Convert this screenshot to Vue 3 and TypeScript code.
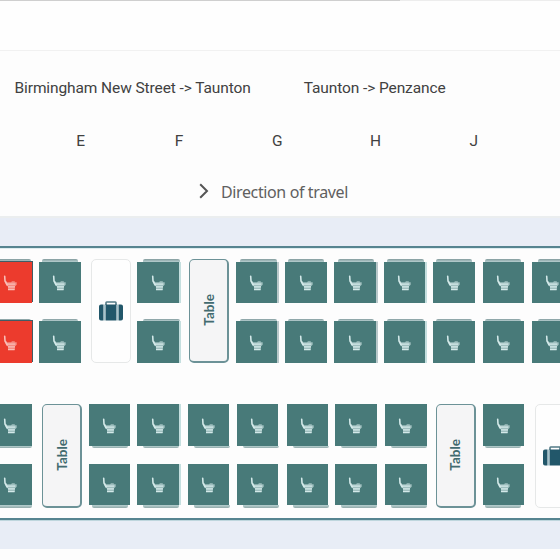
<script setup lang="ts">
type Side = 'none' | 'pale' | 'grey'
interface Column {
  kind: 'seat' | 'table' | 'luggage'
  // distance between the column's edge and its content
  inset: number
  taken?: boolean
  // horizontal extent of the armrest strip
  arm?: [number, number]
  side?: Side
}

const seat = (inset: number, from: number, to: number, side: Side = 'none', taken = false): Column => ({
  kind: 'seat', inset, arm: [from, to], side, taken,
})

const journeys = ['Birmingham New Street -> Taunton', 'Taunton -> Penzance']
const coaches = ['E', 'F', 'G', 'H', 'J']

const upper: Column[] = [
  seat(0.5, 4, 41, 'grey', true),
  seat(0, 3, 39),
  { kind: 'luggage', inset: 2.75 },
  seat(-0.25, 6, 43, 'pale'),
  { kind: 'table', inset: 2.25 },
  seat(-0.25, 4, 41, 'grey'),
  seat(0, 3, 39),
  seat(-0.25, 4, 40, 'grey'),
  seat(-0.25, 3, 40, 'pale'),
  seat(0, 3, 39),
  seat(0.5, 2, 38),
  seat(0, 6, 42),
]
const lower: Column[] = [
  seat(0.25, 4, 42),
  { kind: 'table', inset: 3 },
  seat(0.25, 3, 39),
  seat(-0.25, 6, 42, 'pale'),
  seat(1, 6, 42),
  seat(0.75, 6, 42),
  seat(1.25, 6, 42),
  seat(0.5, 6, 42),
  seat(1.25, 6, 42),
  { kind: 'table', inset: 2.5 },
  seat(0.5, 2, 38),
  { kind: 'luggage', inset: 3.25 },
]
const sections = [
  { name: 'upper', columns: upper },
  { name: 'lower', columns: lower },
]
</script>

<template>
  <main class="page">
    <div class="topbar"><span class="progress"></span></div>
    <nav class="journeys">
      <span v-for="j in journeys" :key="j" class="journey">{{ j }}</span>
    </nav>
    <nav class="coaches">
      <span v-for="c in coaches" :key="c">{{ c }}</span>
    </nav>
    <div class="direction">
      <svg width="10" height="16" viewBox="0 0 10 16"><path d="M1.2 1.2 8 8l-6.8 6.8" fill="none" stroke="#555" stroke-width="2" /></svg>
      <span>Direction of travel</span>
    </div>
    <section class="train">
      <div class="carriage">
        <div v-for="s in sections" :key="s.name" class="section" :class="s.name">
          <div v-for="(col, i) in s.columns" :key="i" class="column" :style="{ marginLeft: col.inset + 'px' }">
            <template v-if="col.kind === 'seat'">
              <div v-for="n in 2" :key="n" class="seat" :class="[col.side, { taken: col.taken }]">
                <span class="arm" :style="{ marginLeft: col.arm![0] + 'px', width: col.arm![1] - col.arm![0] + 'px' }"></span>
                <span class="cushion">
                  <svg width="15" height="17" viewBox="0 0 15 17">
                    <path d="M1.7 1.2 2 6 4.2 10" fill="none" stroke="currentColor" stroke-width="1.6" stroke-linecap="round" />
                    <path d="M2.5 5.5 4.2 7.2H8L9 6.2h2.8v1h1.9v2.6l-1.8 1.8v3.2H5v-3L2.8 9.3z" fill="currentColor" opacity=".62" />
                    <path d="M3.6 9.2h8.6M5 11.8h7M5 14.6h6.6" fill="none" stroke="currentColor" stroke-width="1.2" />
                  </svg>
                </span>
              </div>
            </template>
            <div v-else-if="col.kind === 'table'" class="table"><span>Table</span></div>
            <div v-else class="luggage">
              <svg width="26" height="22" viewBox="0 0 26 22">
                <path d="M8 5V2.7q0-.7.7-.7h8.6q.7 0 .7.7V5" fill="none" stroke="#527985" stroke-width="1.6" />
                <path d="M1 6.5Q1 4.5 3 4.5h2.5v16H3q-2 0-2-2zM7.5 4.5h11v16h-11zM20.5 4.5H23q2 0 2 2v12q0 2-2 2h-2.5z" fill="#22576a" />
                <path d="M6.5 4.5v16M19.5 4.5v16" stroke="#a5c5cd" stroke-width="1" />
              </svg>
            </div>
          </div>
        </div>
      </div>
    </section>
  </main>
</template>

<style>
body { margin: 0; background: #fdfdfd; }
</style>

<style scoped>
.page { width: 560px; height: 560px; overflow: hidden; background: #fdfdfd; color: #414141; font: 15.5px Roboto, sans-serif; }
.topbar { box-sizing: border-box; height: 51px; border-bottom: 1px solid #f1f1f1; background: #fefefe; }
.progress { display: block; width: 400px; height: 1px; background: #cfcfcf; box-shadow: 160px 0 #ededed; }
.journeys { display: flex; gap: 53px; height: 74px; padding-left: 14.5px; line-height: 74px; white-space: nowrap; letter-spacing: -.1px; }
.coaches { display: grid; grid-template-columns: repeat(5, 98.3px); padding-left: 31.5px; height: 34px; line-height: 33px; text-align: center; }
.direction { display: flex; align-items: center; gap: 12px; height: 57px; padding-left: 199px; font: 16px "Noto Sans", sans-serif; letter-spacing: -.38px; color: #606060; box-sizing: border-box; padding-top: 9px; }
.direction svg { margin-bottom: 3px; }
.train { height: 333px; box-sizing: border-box; padding-top: 30px; background: #e8edf6; box-shadow: inset 0 2px #ebeeef; overflow: hidden; }
.carriage { box-sizing: border-box; height: 274px; border: solid #568490; border-width: 2px 0; background: #fdfdfd; padding-top: 11px; box-shadow: 0 1px #bed6dd, inset 0 1px #dcecef; }
.section { display: grid; grid-template-columns: repeat(12, 49.25px); margin-left: -10.25px; height: 104px; }
.lower { margin-top: 41px; }
.column { width: 42px; }
.seat { display: flex; flex-direction: column; width: 41.5px; height: 44px; margin-bottom: 15.5px; }
.arm { height: 2.5px; flex: none; border-radius: 2px 2px 0 0; background: linear-gradient(#839b9d, #b7d0d1); }
.lower .seat { flex-direction: column-reverse; }
.lower .arm { border-radius: 0 0 2px 2px; background: linear-gradient(#b7d1d1, #92a9a9); }
.cushion { display: flex; align-items: center; justify-content: center; height: 41.5px; background: #487a79; color: #d3e9e9; }
.cushion svg { margin-top: 3px; }
.pale .cushion { box-shadow: 2px 0 #c5dfdf; }
.grey .cushion { box-shadow: 2px 0 #b9c8ca; }
.taken .cushion { background: #ec3b2d; color: #f8bdb6; box-shadow: 1px -1px #405c65; height: 42.5px; }
.taken svg { margin-right: 2px; }
.table, .luggage { box-sizing: border-box; display: flex; align-items: center; justify-content: center; width: 40px; height: 103.5px; border-radius: 5px; }
.table { border: 1.5px solid #6c9297; border-width: 1px 2px 2px 1px; background: #f5f5f6; color: #426b70; font: 700 13.5px Lato, sans-serif; }
.table span { writing-mode: vertical-rl; transform: rotate(180deg); }
.luggage { border: 1px solid #e6e8e8; background: #fefefe; }
</style>
